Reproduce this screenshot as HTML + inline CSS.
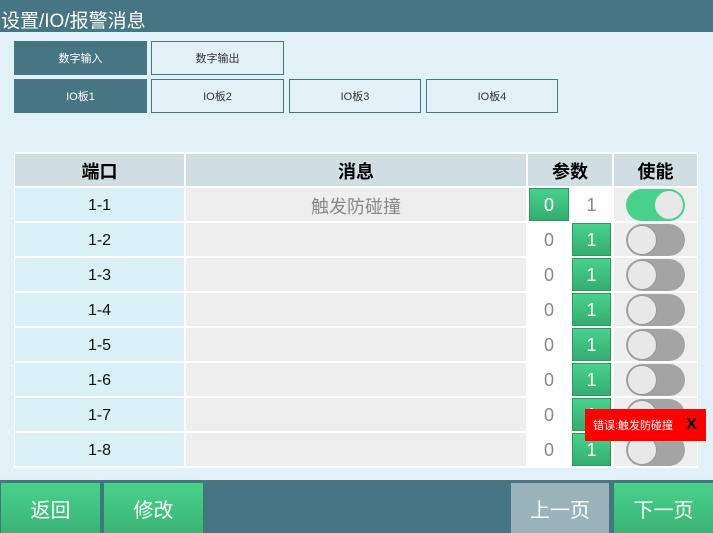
<!DOCTYPE html><html><head><meta charset="utf-8"><style>
*{margin:0;padding:0;box-sizing:border-box}
body{width:713px;height:533px;background:#e1f1f7;position:relative;overflow:hidden;font-family:"Liberation Sans","Noto Sans CJK SC",sans-serif}
.a{position:absolute;display:flex;align-items:center;justify-content:center}
.hd{left:0;top:0;width:713px;height:32px;background:#477583;color:#fff;font-size:19px;justify-content:flex-start;padding-top:6px;padding-left:1px}
.tab{height:34px;font-size:11px;border:1px solid #477583;color:#333;background:#e1f1f7}
.tab.on{background:#477583;color:#fff}
.tbl{left:14px;top:152px;width:684px;height:316px;background:#fff}
.th{background:#d0dde1;font-weight:bold;font-size:18px;color:#000;padding-top:2px}
.port{background:#d9f0f7;font-size:16px;color:#111;padding-top:3px}
.msg{background:#eeeeee;font-size:18px;color:#888;padding-top:2px}
.en{background:#eeeeee}
.pw{background:#fff}
.p{font-size:18px;color:#888;padding-top:2px}
.g{background:linear-gradient(#48d18c,#35ad70);color:#fff;border:1px solid #2a9a60}
.tg{width:59px;height:32px;border-radius:16px;background:#a4a4a4}
.tg i{position:absolute;top:1px;width:30px;height:30px;border-radius:50%;background:#e8e8e8;border:1px solid #999}
.tg.on{background:#48d18c}
.tg.on i{right:1px;border-color:#48d18c}
.tg.off i{left:1px}
.ft{left:0;top:480px;width:713px;height:53px;background:#477583}
.btn{top:483px;height:50px;font-size:20px;color:#fff;background:linear-gradient(#48d18c,#3bb476);box-shadow:0 0 3px #2c8a5a}
</style></head><body>
<div class="a hd">设置/IO/报警消息</div>
<div class="a tab on" style="left:14px;top:41px;width:133px">数字输入</div>
<div class="a tab" style="left:151px;top:41px;width:133px">数字输出</div>
<div class="a tab on" style="left:14px;top:79px;width:133px">IO板1</div>
<div class="a tab" style="left:151px;top:79px;width:133px">IO板2</div>
<div class="a tab" style="left:289px;top:79px;width:132px">IO板3</div>
<div class="a tab" style="left:426px;top:79px;width:132px">IO板4</div>
<div class="a tbl"></div>
<div class="a th" style="left:15px;top:154px;width:169px;height:32px">端口</div>
<div class="a th" style="left:186px;top:154px;width:340px;height:32px">消息</div>
<div class="a th" style="left:528px;top:154px;width:84px;height:32px">参数</div>
<div class="a th" style="left:614px;top:154px;width:83px;height:32px">使能</div>
<div id="rows"></div>
<script>
var h='';
for(var i=0;i<8;i++){var t=188+35*i;
h+='<div class="a port" style="left:15px;top:'+t+'px;width:169px;height:33px">1-'+(i+1)+'</div>';
h+='<div class="a msg" style="left:186px;top:'+t+'px;width:340px;height:33px">'+(i==0?'触发防碰撞':'')+'</div>';
h+='<div class="a pw" style="left:528px;top:'+t+'px;width:84px;height:33px"></div>';
if(i==0){h+='<div class="a p g" style="left:529px;top:'+t+'px;width:40px;height:33px;color:#fff">0</div><div class="a p" style="left:572px;top:'+t+'px;width:39px;height:33px">1</div>';}
else{h+='<div class="a p" style="left:529px;top:'+t+'px;width:40px;height:33px">0</div><div class="a p g" style="left:572px;top:'+t+'px;width:39px;height:33px;color:#fff">1</div>';}
h+='<div class="a en" style="left:614px;top:'+t+'px;width:83px;height:33px"></div>';
h+='<div class="a tg '+(i==0?'on':'off')+'" style="left:626px;top:'+(t+1)+'px"><i></i></div>';}
document.getElementById('rows').innerHTML=h;
</script>
<div class="a" style="left:585px;top:409px;width:121px;height:32px;background:#ff0000;color:#fff;font-size:11px;justify-content:flex-start;padding-left:8px">错误:触发防碰撞<b style="color:#000;font-size:16px;margin-left:13px">X</b></div>
<div class="a ft"></div>
<div class="a btn" style="left:1px;width:99px">返回</div>
<div class="a btn" style="left:104px;width:99px">修改</div>
<div class="a btn" style="left:511px;width:98px;background:#9ab3ba;box-shadow:none">上一页</div>
<div class="a btn" style="left:614px;width:99px">下一页</div>
</body></html>
